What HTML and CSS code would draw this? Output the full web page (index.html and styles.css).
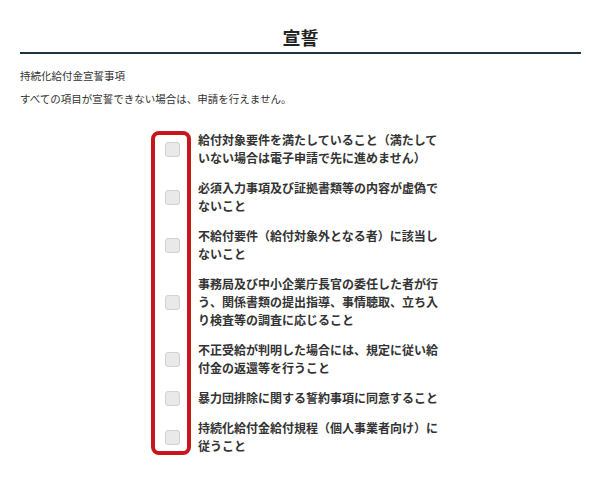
FILE: index.html
```html
<!DOCTYPE html>
<html lang="ja">
<head>
<meta charset="utf-8">
<title>宣誓</title>
<link rel="stylesheet" href="styles.css">
</head>
<body>
<div class="page">
  <h1 class="title">宣誓</h1>
  <div class="intro">
    <p class="intro-label">持続化給付金宣誓事項</p>
    <p class="intro-note">すべての項目が宣誓できない場合は、申請を行えません。</p>
  </div>
  <div class="oath-list">
    <div class="highlight"></div>
    <label class="oath-item"><span class="box-col"><span class="check"></span></span><span class="oath-text">給付対象要件を満たしていること（満たしていない場合は電子申請で先に進めません）</span></label>
    <label class="oath-item"><span class="box-col"><span class="check"></span></span><span class="oath-text">必須入力事項及び証拠書類等の内容が虚偽でないこと</span></label>
    <label class="oath-item"><span class="box-col"><span class="check"></span></span><span class="oath-text">不給付要件（給付対象外となる者）に該当しないこと</span></label>
    <label class="oath-item"><span class="box-col"><span class="check"></span></span><span class="oath-text">事務局及び中小企業庁長官の委任した者が行う、関係書類の提出指導、事情聴取、立ち入り検査等の調査に応じること</span></label>
    <label class="oath-item"><span class="box-col"><span class="check"></span></span><span class="oath-text">不正受給が判明した場合には、規定に従い給付金の返還等を行うこと</span></label>
    <label class="oath-item"><span class="box-col"><span class="check"></span></span><span class="oath-text">暴力団排除に関する誓約事項に同意すること</span></label>
    <label class="oath-item"><span class="box-col"><span class="check"></span></span><span class="oath-text">持続化給付金給付規程（個人事業者向け）に従うこと</span></label>
  </div>
</div>
</body>
</html>
```

FILE: styles.css
```css
html, body {
  margin: 0;
  padding: 0;
  background: #ffffff;
}

body {
  font-family: "Noto Sans CJK JP", "Noto Sans", sans-serif;
  color: #333333;
}

.page {
  padding: 25px 19px 0 20px;
}

.title {
  margin: 0;
  font-size: 18px;
  line-height: 24px;
  font-weight: 700;
  text-align: center;
  color: #222222;
  padding-bottom: 3px;
  border-bottom: 2px solid #1e3442;
}

.intro {
  margin-top: 10px;
}

.intro p {
  margin: 0;
  line-height: 23px;
  font-size: 10.5px;
  color: #333333;
}

.oath-list {
  position: relative;
  margin: 21px 0 0 131px;
  display: flex;
  flex-direction: column;
  gap: 12px;
  width: 290px;
}

.highlight {
  position: absolute;
  left: 0;
  top: 0;
  width: 40px;
  height: 100%;
  box-sizing: border-box;
  border: 4px solid #c8161d;
  border-radius: 8px;
}

.oath-item {
  display: flex;
  align-items: center;
}

.box-col {
  width: 40px;
  flex: none;
  display: flex;
  justify-content: center;
  padding-left: 1px;
}

.check {
  width: 15px;
  height: 15px;
  box-sizing: border-box;
  background: #e9e9e9;
  border: 1px solid #d2d2d2;
  border-radius: 3px;
}

.oath-text {
  margin-left: 6px;
  width: 242px;
  font-size: 12px;
  line-height: 18px;
  font-weight: 700;
  color: #333333;
}
```
